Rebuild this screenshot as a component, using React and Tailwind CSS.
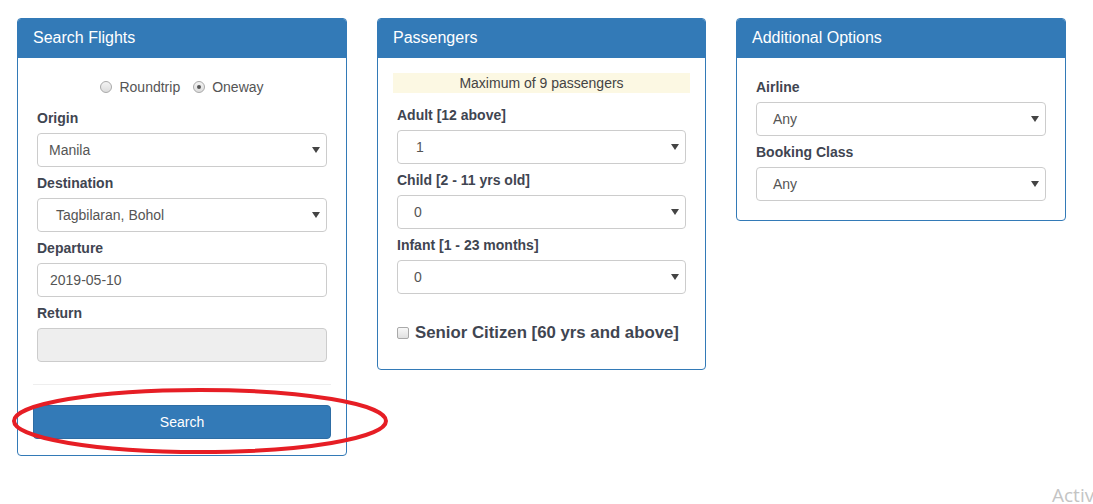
import React from 'react'

const font = { fontFamily: '"Liberation Sans", Arial, sans-serif' }

function Caret() {
  return (
    <svg width="8" height="6" viewBox="0 0 8 6" className="shrink-0">
      <path d="M0 0 L8 0 L4 6 Z" fill="#444" />
    </svg>
  )
}

function Select({ value, indent = 'pl-[11px]' }) {
  return (
    <div className={`h-[34px] rounded-[4px] border border-[#ccc] bg-white flex items-center justify-between pr-[6px] ${indent}`}>
      <span className="text-[14px] text-[#555]">{value}</span>
      <Caret />
    </div>
  )
}

function Field({ label, children }) {
  return (
    <div className="mb-[6px]">
      <div className="h-[20px] leading-[20px] text-[14px] font-bold text-[#3f4551] mb-[5px]">{label}</div>
      {children}
    </div>
  )
}

function Panel({ title, children, className = 'w-[330px]' }) {
  return (
    <div className={`rounded-[4px] border border-[#337ab7] bg-white overflow-hidden ${className}`}>
      <div className="h-[39px] bg-[#337ab7] px-[15px] pb-[2px] flex items-center text-white text-[16px]">{title}</div>
      {children}
    </div>
  )
}

function Radio({ checked, label }) {
  return (
    <label className="flex items-center gap-[7px]">
      <span className="w-[12px] h-[12px] rounded-full border border-[#a9a9a9] bg-gradient-to-b from-[#f4f4f4] to-[#dcdcdc] flex items-center justify-center">
        {checked && <span className="w-[4px] h-[4px] rounded-full bg-[#555]" />}
      </span>
      <span className="text-[14px] text-[#555]">{label}</span>
    </label>
  )
}

export default function App() {
  return (
    <div className="relative w-[1093px] h-[504px] overflow-hidden bg-white" style={font}>
      <div className="flex items-start gap-[30px] pl-[17px] pt-[18px]">
        {/* Search Flights */}
        <Panel title="Search Flights">
          <div className="px-[15px] pt-[19px] pb-[16px]">
            <div className="h-[20px] flex items-center justify-center gap-[13px] mb-[11px]">
              <Radio label="Roundtrip" />
              <Radio checked label="Oneway" />
            </div>
            <div className="px-[4px]">
              <Field label="Origin"><Select value="Manila" /></Field>
              <Field label="Destination"><Select value="Tagbilaran, Bohol" indent="pl-[18px]" /></Field>
              <Field label="Departure">
                <div className="h-[34px] rounded-[4px] border border-[#ccc] bg-white flex items-center pl-[12px] text-[14px] text-[#555]">2019-05-10</div>
              </Field>
              <Field label="Return">
                <div className="h-[34px] rounded-[4px] border border-[#ccc] bg-[#eee]" />
              </Field>
            </div>
            <div className="mt-[22px] border-t border-[#eee] mb-[20px]" />
            <button className="w-full h-[34px] rounded-[4px] bg-[#337ab7] border border-[#2e6da4] text-white text-[14px]">Search</button>
          </div>
        </Panel>

        {/* Passengers */}
        <Panel title="Passengers" className="w-[329px]">
          <div className="px-[15px] pt-[15px] pb-[24px]">
            <div className="h-[20px] bg-[#fcf8e3] flex items-center justify-center text-[14px] text-[#444] mb-[12px]">Maximum of 9 passengers</div>
            <div className="px-[4px]">
              <Field label="Adult [12 above]"><Select value="1" indent="pl-[18px]" /></Field>
              <Field label="Child [2 - 11 yrs old]"><Select value="0" indent="pl-[16px]" /></Field>
              <Field label="Infant [1 - 23 months]"><Select value="0" indent="pl-[16px]" /></Field>
              <div className="mt-[27px] flex items-center gap-[6px] h-[24px]">
                <span className="w-[12px] h-[12px] rounded-[2px] border border-[#a9a9a9] bg-gradient-to-b from-[#f8f8f8] to-[#e0e0e0]" />
                <span className="text-[16.8px] font-bold text-[#3f4551]">Senior Citizen [60 yrs and above]</span>
              </div>
            </div>
          </div>
        </Panel>

        {/* Additional Options */}
        <Panel title="Additional Options">
          <div className="px-[19px] pt-[19px] pb-[13px]">
            <Field label="Airline"><Select value="Any" indent="pl-[16px]" /></Field>
            <Field label="Booking Class"><Select value="Any" indent="pl-[16px]" /></Field>
          </div>
        </Panel>
      </div>

      {/* red annotation around the button */}
      <svg className="absolute left-0 top-0 pointer-events-none" width="1093" height="504">
        <ellipse cx="200" cy="421" rx="186" ry="31" fill="none" stroke="#e61e25" strokeWidth="4" />
      </svg>

      <div className="absolute left-[1052px] top-[487px] leading-[17px] whitespace-nowrap text-[19px] text-[#c4c4c4]" style={{ fontFamily: '"Open Sans", sans-serif' }}>Activ</div>
    </div>
  )
}
